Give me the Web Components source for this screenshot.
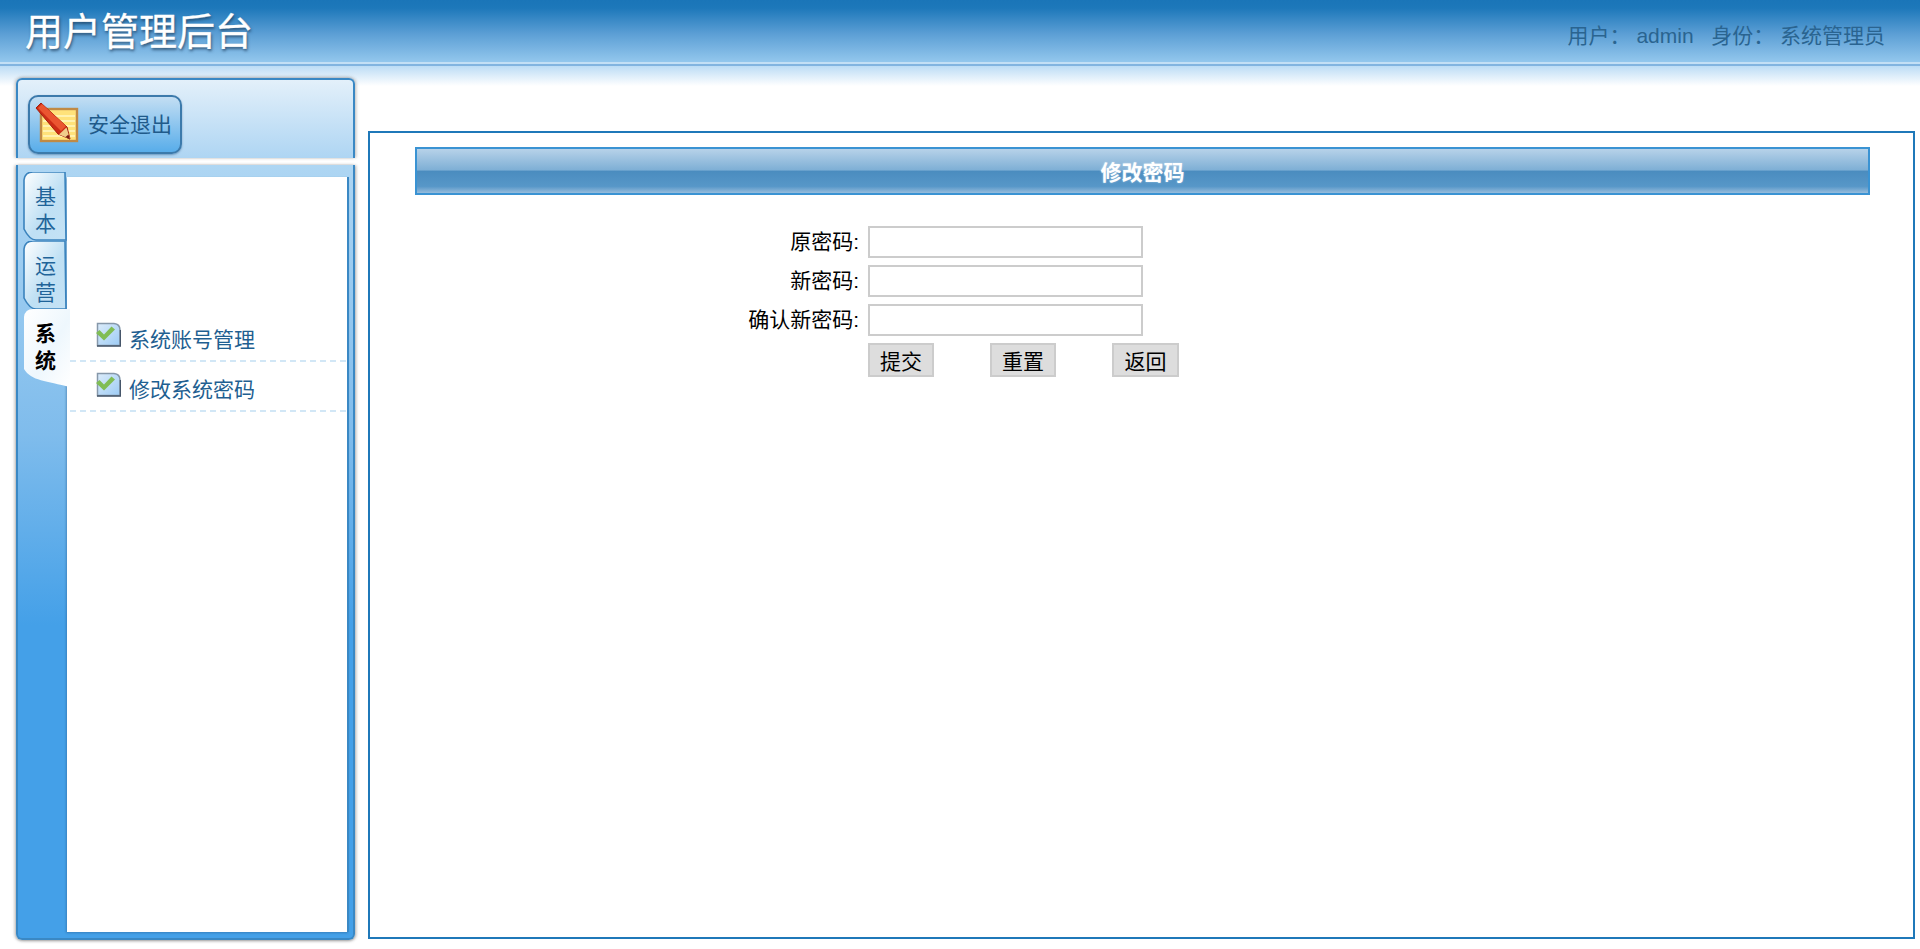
<!DOCTYPE html>
<html lang="zh-CN">
<head>
<meta charset="utf-8">
<title>用户管理后台</title>
<style>
	html, body { margin: 0; height: 100%; background: #fff; }
	body { overflow: hidden; font-family: "Liberation Sans", "Noto Sans CJK SC", sans-serif; }
</style>
</head>
<body>
<app-shell>
	<app-header slot="header" user="admin" role="系统管理员">用户管理后台</app-header>
	<side-panel slot="side">
		<side-tab slot="tabs">基本</side-tab>
		<side-tab slot="tabs">运营</side-tab>
		<side-tab slot="tabs" active>系统</side-tab>
		<side-item>系统账号管理</side-item>
		<side-item>修改系统密码</side-item>
	</side-panel>
	<main-panel slot="main" heading="修改密码">
		<password-form></password-form>
	</main-panel>
</app-shell>

<script>
function define(name, markup, base = HTMLElement) {
	customElements.define(name, class extends base {
		constructor() {
			super();
			this.attachShadow({ mode: "open" });
			this.shadowRoot.innerHTML = typeof markup === "function" ? markup(this) : markup;
		}
	});
}

define("app-shell", `<style>
	:host {
		display: block;
		height: 949px;
		background: linear-gradient(#bcdcf5, #fff) no-repeat 0 66px / 100% 20px;
	}
	.body {
		display: flex;
		align-items: flex-start;
		padding-left: 16px;
	}
</style>
<slot name="header"></slot>
<div class="body">
	<slot name="side"></slot>
	<slot name="main"></slot>
</div>`);

define("app-header", (el) => `<style>
	:host {
		display: block;
		height: 78px;
		box-sizing: border-box;
	}
	.bar {
		display: flex;
		align-items: center;
		justify-content: space-between;
		height: 62px;
		padding: 0 35px 0 25px;
		background: linear-gradient(#1a75b8 0, #1d78ba 8px, #5c9fd5 34px, #93c7ed 62px);
		border-bottom: 2px solid #c3dff5;
		box-shadow: 0 2px 0 #82b4e0;
	}
	h1 {
		margin: 0 0 5px;
		font-size: 38px;
		font-weight: 400;
		color: #fff;
		-webkit-text-stroke: .3px #fff;
		text-shadow: 1px 2px 3px rgba(30, 60, 90, .8);
	}
	.info {
		margin-top: 5px;
		font-size: 21px;
		color: #2a6490;
		white-space: pre;
	}
	.colon { font-family: "Noto Sans CJK TC", sans-serif; }
</style>
<div class="bar">
	<h1><slot></slot></h1>
	<div class="info">用户<span class="colon">：</span> ${el.getAttribute("user")}   身份<span class="colon">：</span> ${el.getAttribute("role")}</div>
</div>`);

define("side-panel", `<style>
	:host {
		display: block;
		width: 339px;
		flex: none;
	}
	.top {
		box-sizing: border-box;
		height: 80px;
		padding: 15px 0 0 10px;
		border: 2px solid #3a88c4;
		border-bottom: 0;
		border-radius: 6px 6px 0 0;
		background: linear-gradient(#e3f0fa, #aed5f3);
		box-shadow: 0 -1px 3px rgba(120, 120, 120, .35), 2px 0 3px rgba(150, 150, 150, .3), -2px 0 3px rgba(150, 150, 150, .3);
	}
	.logout {
		display: flex;
		align-items: center;
		gap: 9px;
		box-sizing: border-box;
		width: 154px;
		height: 59px;
		padding: 0 0 0 5px;
		border: 2px solid #3c7aab;
		border-radius: 10px;
		background: linear-gradient(#c3def3, #58adea);
		font: inherit;
		font-size: 21px;
		color: #205a8a;
		box-shadow: 0 1px 2px rgba(40, 90, 140, .5);
	}
	.logout span { margin-top: -4px; }
	.logout svg { margin-top: -3px; }
	.lower {
		box-sizing: border-box;
		display: flex;
		height: 775px;
		margin-top: 7px;
		border: solid #3a88c4;
		border-width: 0 2px 2px;
		border-radius: 0 0 6px 6px;
		padding: 12px 4px 6px 0;
		background: linear-gradient(#aed6f3 0, #7fbcec 270px, #44a0e8 460px, #44a0e8 100%);
		box-shadow: 0 1px 3px rgba(90, 90, 90, .5), 2px 0 3px rgba(150, 150, 150, .3), -2px 0 3px rgba(150, 150, 150, .3);
	}
	.tabs {
		box-sizing: border-box;
		width: 49px;
		flex: none;
		margin-top: -5px;
		padding-left: 5px;
		position: relative;
		z-index: 1;
	}
	.content {
		flex: 1;
		box-sizing: border-box;
		padding-top: 135px;
		background: #fff;
		border-right: 2px solid #3a88c4;
		box-shadow: -1px 1px 2px rgba(40, 90, 140, .45);
	}
</style>
<div class="top">
	<button class="logout">
		<svg width="44" height="42" viewBox="0 0 44 42">
			<rect x="6" y="7" width="36" height="32" fill="#ffe27a" stroke="#c08a45" stroke-width="2.4"/>
			<path d="M8 14h32M8 19h32M8 24h32M8 29h32M8 34h32" stroke="#fff2b0" stroke-width="2"/>
			<path d="M1 6 6 1 32 25 35 37 23 32Z" fill="#cc2c16" stroke="#a31c0c"/>
			<path d="M3 6 7 2 31 24 26 29Z" fill="#ea5530"/>
			<path d="M24 32.500 31.500 25.500 35 37Z" fill="#f0cd8c"/>
			<path d="M30.500 35 33.500 32.500 35 37.500Z" fill="#7a1c10"/>
		</svg>
		<span>安全退出</span>
	</button>
</div>
<div class="lower">
	<div class="tabs"><slot name="tabs"></slot></div>
	<div class="content"><slot></slot></div>
</div>`);

define("side-tab", (el) => {
	const active = el.hasAttribute("active");
	const stroke = active ? "none" : "#3a83bd";
	const id = active ? "a" : "n";
	const h = active ? 78 : 69;
	const stop = active ? "#eef7fd" : "#bfe0f4";
	const bottom = active
		? "M1 60 C8 72 24 72 47 78 L47 0 L10 0 Q2 0 1 8 Z"
		: `M1 57 C4 63 8 68 13 68 L43 68 L42 0 L10 0 Q2 0 1 8 Z`;
	return `<style>
		:host {
			display: block;
			position: relative;
			width: 43px;
			height: ${active ? 78 : 68.5}px;
			font-size: 21px;
			line-height: 27px;
			text-align: center;
			font-weight: ${active ? 700 : 400};
			color: ${active ? "#000" : "#1f6499"};
		}
		svg { position: absolute; left: 0; top: 0; }
		.label {
			position: relative;
			width: 21px;
			margin: 0 auto;
			padding-top: 11px;
			left: 1px;
		}
	</style>
	<svg width="47" height="${h}" viewBox="0 0 47 ${h}">
		<defs><linearGradient id="${id}" x1="0" y1="0" x2="1" y2="1">
			<stop offset="0" stop-color="#fff"/><stop offset=".55" stop-color="${stop}"/>
			<stop offset="1" stop-color="${active ? "#fff" : "#c4e2f5"}"/>
		</linearGradient></defs>
		<path d="${bottom}" fill="url(#${id})" stroke="${stroke}" stroke-width="1.6"/>
	</svg>
	<div class="label"><slot></slot></div>`;
});

define("side-item", `<style>
	:host {
		display: flex;
		align-items: flex-start;
		box-sizing: border-box;
		height: 50px;
		padding: 10px 0 0 26px;
		border-bottom: 2px dashed #d2e7f6;
		margin: 0 1px 0 3px;
		font-size: 21px;
		color: #1f5f91;
	}
	span { margin: 6px 0 0 8px; line-height: 24px; white-space: nowrap; }
	svg { flex: none; }
</style>
<svg width="25" height="25" viewBox="0 0 25 25">
	<defs><linearGradient id="d" x1="0" y1="0" x2="1" y2="1">
		<stop offset="0" stop-color="#dcecfa"/><stop offset="1" stop-color="#9ccbf5"/>
	</linearGradient></defs>
	<path d="M1.500 1.500H18Q24 2 24 8V23.500H1.500Z" fill="url(#d)" stroke="#8698aa" stroke-width="1.500"/>
	<path d="M1 24H24.500V8" fill="none" stroke="#46566a" stroke-width="1.500"/>
	<path d="M0 11 3.500 8 8 12.500 15.500 4.500 19 7.500 8 18.500Z" fill="#80bd55"/>
</svg>
<span><slot></slot></span>`);

define("main-panel", (el) => `<style>
	:host {
		display: block;
		box-sizing: border-box;
		width: 1547px;
		height: 808px;
		margin: 53px 0 0 13px;
		padding: 14px 43px 0 45px;
		border: 2px solid #1f78b9;
	}
	.title {
		box-sizing: border-box;
		height: 48px;
		line-height: 47px;
		text-align: center;
		border: 2px solid #3a93d3;
		background: linear-gradient(#b7d2e9 0, #7eafd5 48%, #4a8cbf 50%, #5797c8 85%, #96bcdc 100%);
		color: #fff;
		font-size: 21px;
		font-weight: 700;
		text-shadow: 0 0 2px rgba(255, 255, 255, .5);
	}
</style>
<div class="title">${el.getAttribute("heading")}</div>
<slot></slot>`);

define("password-form", `<style>
	:host { display: block; padding-top: 31px; }
	form {
		display: grid;
		grid-template-columns: 453px 275px;
		row-gap: 7px;
		font-size: 21px;
		color: #000;
	}
	label {
		text-align: right;
		padding-right: 9px;
		line-height: 32px;
		white-space: nowrap;
	}
	input {
		box-sizing: border-box;
		width: 275px;
		height: 32px;
		margin: 0;
		border: 2px solid #ccc;
		background: #fff;
		outline: 0;
	}
	.actions {
		grid-column: 2;
		display: flex;
		gap: 56px;
		width: 320px;
	}
	button {
		box-sizing: border-box;
		width: 66px;
		height: 34px;
		padding: 0;
		border: 2px solid #ccc;
		background: #ddd;
		font: inherit;
		color: #000;
	}
	button:last-child { width: 67px; }
</style>
<form onsubmit="return false">
	<label>原密码:</label><input type="password">
	<label>新密码:</label><input type="password">
	<label>确认新密码:</label><input type="password">
	<div class="actions">
		<button type="submit">提交</button>
		<button type="reset">重置</button>
		<button type="button">返回</button>
	</div>
</form>`);
</script>
</body>
</html>
